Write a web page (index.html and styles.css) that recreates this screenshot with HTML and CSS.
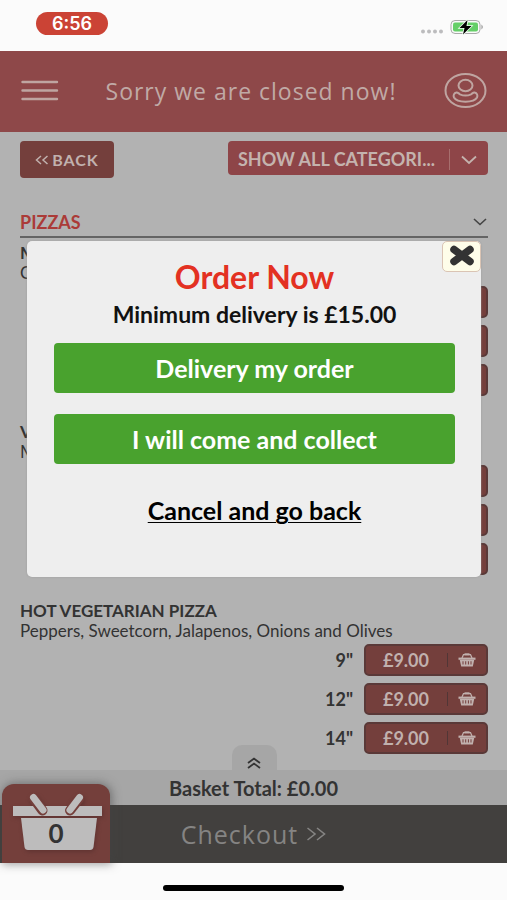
FILE: index.html
```html
<!DOCTYPE html>
<html lang="en">
<head>
<meta charset="utf-8">
<meta name="viewport" content="width=device-width, initial-scale=1">
<title>Order Now</title>
<link rel="stylesheet" href="styles.css">
</head>
<body>
<svg class="sprite" aria-hidden="true">
  <symbol id="basket" viewBox="0 0 18 14">
    <path d="M4 5 5.5 1.6h7L14 5" fill="none" stroke="currentColor" stroke-width="1.3"/>
    <path d="M6.5.3h5v2h-5z" fill="currentColor"/>
    <path d="M.5 4.6h17v2.2h-17z" fill="currentColor"/>
    <path fill-rule="evenodd" d="M1.8 7h14.4l-1.4 6.6H3.2zM4.5 8.2v3.4h1V8.2zm2.7 0v3.4h1V8.2zm2.7 0v3.4h1V8.2zm2.6 0v3.4h1V8.2z" fill="currentColor"/>
  </symbol>
</svg>
<div class="app">
  <div class="status">
    <span class="clock">6:56</span>
    <svg class="signal" viewBox="0 0 64 16" width="64" height="16" aria-hidden="true">
      <g fill="#bcbcbe"><circle cx="3" cy="12.500" r="2"/><circle cx="9" cy="12.500" r="2"/><circle cx="15" cy="12.500" r="2"/><circle cx="21" cy="12.500" r="2"/></g>
      <rect x="31" y="1.500" width="29" height="13" rx="4" fill="#fafafa" stroke="#a9a9a9"/>
      <rect x="33" y="3.500" width="25" height="9" rx="2" fill="#65cf68"/>
      <path d="M61.500 5.500q2.500 2.500 0 5z" fill="#8d8d8d"/>
      <path d="M47.500 1 39.500 9h5l-1.500 6.500 8.500-8.500h-5z" fill="#000" stroke="#f4fff4" stroke-width="1.600" paint-order="stroke"/>
    </svg>
  </div>
  <header class="header">
    <button class="icon-button" aria-label="Menu">
      <svg viewBox="0 0 38 24" width="38" height="24"><path d="M1.500 3h34.500M1.500 11.500h34.500M1.500 20h34.500" stroke="#bfa5a1" stroke-width="2.400" stroke-linecap="round"/></svg>
    </button>
    <h1 class="notice">Sorry we are closed now!</h1>
    <button class="icon-button" aria-label="Account">
      <svg viewBox="0 0 44 36" width="44" height="36" fill="none" stroke="#bfa5a1" stroke-width="2">
        <ellipse cx="22.500" cy="17.500" rx="20" ry="16.500"/><ellipse cx="22.500" cy="12.500" rx="7" ry="5.800"/>
        <path d="M13.500 19.500c-2.500.5-3.500 3-2.500 5 3 5.500 20 5.500 23 0 1-2 0-4.500-2.500-5-1.500-.2-2 1-3.500 1.800-3 1.400-8 1.400-11 0-1.500-.8-2-2-3.500-1.800z"/>
      </svg>
    </button>
  </header>
  <main class="menu">
    <div class="toolbar">
      <button class="back"><svg viewBox="0 0 14 10" width="14" height="10" fill="none" stroke="currentColor" stroke-width="1.500"><path d="M6 1 1.500 5 6 9M12.500 1 8 5l4.500 4"/></svg>BACK</button>
      <div class="category">
        <select aria-label="Category"><option>SHOW ALL CATEGORI...</option></select>
        <svg class="category-arrow" viewBox="0 0 16 10" width="16" height="10"><path d="M1 1.500 8 8l7-6.500" fill="none" stroke="#c4b3ae" stroke-width="1.800"/></svg>
      </div>
    </div>
    <h2 class="section">PIZZAS <svg viewBox="0 0 14 8" width="14" height="8"><path d="M1 1l6 5.500L13 1" fill="none" stroke="#444" stroke-width="1.600"/></svg></h2>
    <article class="item">
      <h3>MARGHERITA</h3>
      <p>Cheese and Tomato</p>
      <div class="prices">
        <span>9"</span><button class="price"><b>£9.00</b><svg><use href="#basket"/></svg></button>
        <span>12"</span><button class="price"><b>£9.00</b><svg><use href="#basket"/></svg></button>
        <span>14"</span><button class="price"><b>£9.00</b><svg><use href="#basket"/></svg></button>
      </div>
    </article>
    <article class="item">
      <h3>VEGETARIAN</h3>
      <p>Mushrooms and Onions</p>
      <div class="prices">
        <span>9"</span><button class="price"><b>£9.00</b><svg><use href="#basket"/></svg></button>
        <span>12"</span><button class="price"><b>£9.00</b><svg><use href="#basket"/></svg></button>
        <span>14"</span><button class="price"><b>£9.00</b><svg><use href="#basket"/></svg></button>
      </div>
    </article>
    <article class="item">
      <h3>HOT VEGETARIAN PIZZA</h3>
      <p>Peppers, Sweetcorn, Jalapenos, Onions and Olives</p>
      <div class="prices">
        <span>9"</span><button class="price"><b>£9.00</b><svg><use href="#basket"/></svg></button>
        <span>12"</span><button class="price"><b>£9.00</b><svg><use href="#basket"/></svg></button>
        <span>14"</span><button class="price"><b>£9.00</b><svg><use href="#basket"/></svg></button>
      </div>
    </article>
  </main>
  <footer class="footer">
    <button class="expand" aria-label="Show basket"><svg viewBox="0 0 14 12" width="14" height="12" fill="none" stroke="#333" stroke-width="1.800"><path d="M1 6l6-4.500L13 6M1 11l6-4.500L13 11"/></svg></button>
    <div class="total">Basket Total: £0.00</div>
    <button class="checkout">Checkout <svg viewBox="0 0 20 14" width="20" height="14" fill="none" stroke="currentColor" stroke-width="1.600"><path d="M1.500 1 9 7l-7.500 6M11 1l7.500 6-7.500 6"/></svg></button>
    <button class="basket" aria-label="Basket">
      <svg viewBox="0 0 92 60" aria-hidden="true">
        <g fill="#bdbcbc"><path d="M3 14h89v10H3z"/><path d="M11 26h76l-3.500 29q-.5 3-3.500 3H18q-3 0-3.500-3z"/></g>
        <g stroke-linecap="round"><path d="M24 7 32.500 18.500M69 7 60 18.500" stroke="#743f3b" stroke-width="10"/><path d="M23.500 5.500 33 18M69.500 5.500 60 18" stroke="#bdbcbc" stroke-width="7"/></g>
      </svg>
      <span class="count">0</span>
    </button>
  </footer>
  <div class="home"><i></i></div>
  <section class="dialog" role="dialog" aria-labelledby="dialog-title">
    <button class="close" aria-label="Close"><svg viewBox="0 0 28 24" width="28" height="24"><path d="M6 5.500l16 12m0-12-16 12" stroke="#333" stroke-width="7.500" stroke-linecap="round"/></svg></button>
    <h2 id="dialog-title">Order Now</h2>
    <p>Minimum delivery is £15.00</p>
    <button class="choice">Delivery my order</button>
    <button class="choice">I will come and collect</button>
    <a class="cancel" href="#">Cancel and go back</a>
  </section>
</div>
</body>
</html>
```
FILE: styles.css
```css
* { box-sizing: border-box; }
body { margin: 0; background: #b2b2b2; color: #333; font-family: Lato, "Liberation Sans", sans-serif; }
h1, h2, h3, p { margin: 0; }
button, select { font-family: inherit; border: 0; margin: 0; padding: 0; background: none; }
svg { display: block; flex: none; }
.sprite { position: absolute; width: 0; height: 0; }
.app { position: relative; display: flex; flex-direction: column; min-height: 100vh; }

.status { height: 51px; padding: 12px 23px 16px 36px; background: #fbfbfb; display: flex; justify-content: space-between; align-items: flex-start; }
.clock { width: 72px; height: 23px; border-radius: 12px; background: #cb4335; color: #fff; font: 600 18px/23px Inter, sans-serif; text-align: center; }
.signal { margin-top: 7px; }

.header { height: 81px; padding: 0 20px 2px 21px; background: #8e4849; display: flex; align-items: center; justify-content: space-between; }
.notice { color: #c0aaa6; font: 500 23px/30px "Open Sans", sans-serif; letter-spacing: 1px; }

.menu { flex: 1; padding: 9px 19px 15px 20px; }
.toolbar { display: flex; justify-content: space-between; align-items: flex-start; }
.back { width: 94px; height: 37px; border-radius: 4px; background: #743f3c; color: #c1b1ae; display: flex; align-items: center; justify-content: center; gap: 3px; font-size: 16px; font-weight: 700; letter-spacing: 1px; }
.category { position: relative; width: 260px; height: 34px; }
.category select { appearance: none; width: 100%; height: 100%; padding: 2px 38px 0 10px; border-radius: 4px; background: #8e4548; color: #c4b3ae; font-size: 18px; font-weight: 700; }
.category-arrow { position: absolute; right: 11px; top: 14px; pointer-events: none; }
.category::after { content: ""; position: absolute; right: 38px; top: 8px; width: 1px; height: 21px; background: #a76f6e; }
.section { display: flex; justify-content: space-between; align-items: center; margin-top: 33px; padding-bottom: 3px; border-bottom: 2px solid #646464; color: #ab3b38; font-size: 18px; line-height: 22px; }
.section svg { margin-right: 1px; }
.item { margin-top: 26px; }
.section + .item { margin-top: 5px; }
.item h3 { font-size: 17px; line-height: 20px; }
.item p { font-size: 17px; line-height: 19px; }
.prices { margin-top: 4px; display: grid; grid-template-columns: 1fr 124px; gap: 7px 11px; align-items: center; text-align: right; font-size: 18px; font-weight: 700; }
.price { height: 32px; border: 2px solid #5a3938; border-radius: 5px; background: #743f3c; color: #c1b1ae; display: flex; align-items: center; font-size: 18px; }
.price b { flex: 1; padding-right: 1px; }
.price svg { width: 39px; height: 14px; border-left: 1px solid #513636; }

.footer { position: relative; text-align: center; }
.expand { position: absolute; left: calc(50% - 22px); top: -25px; width: 45px; height: 26px; border-radius: 10px 10px 0 0; background: #a6a6a6; display: flex; align-items: center; justify-content: center; padding-top: 10px; }
.total { height: 35px; background: #a6a6a6; font-size: 20px; font-weight: 700; line-height: 36px; }
.checkout { width: 100%; height: 58px; background: #42403e; color: #858483; display: flex; align-items: center; justify-content: center; gap: 8px; font: 500 25px/30px "Open Sans", sans-serif; letter-spacing: 1px; }
.basket { position: absolute; left: 2px; bottom: 0; width: 108px; height: 79px; border-radius: 12px 12px 0 0; background: #743f3b; box-shadow: 1px 0 10px 1px #4448; padding: 8px; display: flex; align-items: flex-start; }
.basket svg { width: 92px; height: 60px; overflow: visible; filter: drop-shadow(1px 2px 2px #4226); }
.count { position: absolute; left: 0; right: 0; top: 34px; color: #333; font: 700 26px/30px Lato, sans-serif; }
.home { height: 37px; background: #fbfbfb; display: flex; justify-content: center; align-items: flex-start; padding-top: 22px; }
.home i { width: 181px; height: 6px; border-radius: 3px; background: #000; }

.dialog { position: absolute; top: 241px; left: 27px; right: 26px; min-height: 336px; padding: 19px 26px 50px 27px; border-radius: 5px; background: #eee; box-shadow: 0 0 2px #999; color: #111; display: flex; flex-direction: column; align-items: center; text-align: center; }
.dialog h2 { color: #e33122; font-size: 32px; line-height: 34px; }
.dialog p { margin-top: 7px; font-size: 23px; font-weight: 700; line-height: 26px; }
.choice { width: 100%; height: 50px; border-radius: 4px; background: #49a22e; color: #fff; font-size: 25px; font-weight: 700; margin-top: 16px; }
.choice + .choice { margin-top: 21px; }
.cancel { margin-top: 30px; color: #000; font-size: 25px; line-height: 32px; font-weight: 700; text-decoration-thickness: 1px; text-underline-offset: 2px; }
.close { position: absolute; top: 0; right: 0; width: 39px; height: 31px; border: 1px solid #dac4b4; border-radius: 5px; background: #fefde9; display: flex; align-items: flex-start; padding-top: 2px; justify-content: center; }
```
